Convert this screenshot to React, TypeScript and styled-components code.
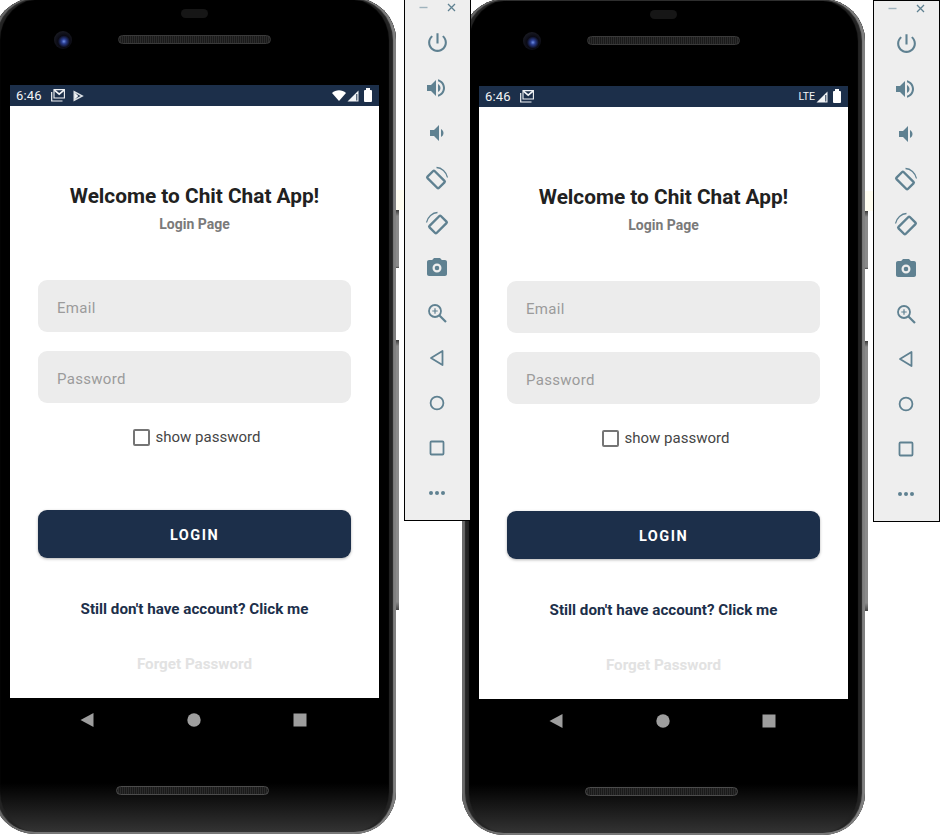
import React from 'react';
import styled, { createGlobalStyle } from 'styled-components';

const navy = '#1c2f4a';
const toolColor = '#5f8191';

const GlobalStyle = createGlobalStyle`
  html, body {
    margin: 0;
    padding: 0;
    background: #fff;
    overflow: hidden;
  }
  * {
    box-sizing: border-box;
  }
`;

const Desktop = styled.div`
  display: flex;
  width: 941px;
  height: 836px;
  margin-left: -7px;
  overflow: visible;
`;

const Emulator = styled.div<{ $second?: boolean }>`
  position: relative;
  z-index: ${(props) => (props.$second ? 1 : 2)};
  display: flex;
  align-items: flex-start;
  gap: 8px;
  margin-top: ${(props) => (props.$second ? '-1px' : '-2px')};
  margin-left: ${(props) => (props.$second ? '-9px' : '0')};
`;

const Phone = styled.div`
  position: relative;
  flex: none;
  display: flex;
  flex-direction: column;
  width: 403px;
  height: 836px;
  padding: 0 17px;
  border-radius: 42px;
  background: linear-gradient(180deg, #000 0, #000 785px, #333 834px);
  box-shadow: inset -3px 0 1px #808080, inset 3px 0 1px #6a6a6a, inset 0 -2px 0 #777, inset 0 2px 0 #2e2e2e,
    inset -7px 0 1px #242424, inset 7px 0 1px #242424;
`;

const SideGlow = styled.div`
  position: absolute;
  top: 192px;
  right: -8px;
  width: 8px;
  height: 20px;
  background: #fffdf0;
`;

const SideKey = styled.div<{ $top: number; $height: number }>`
  position: absolute;
  top: ${(props) => props.$top}px;
  right: -3px;
  width: 3px;
  height: ${(props) => props.$height}px;
  background: linear-gradient(180deg, #3a3a3a 0, #8a8a8a 6px, #8a8a8a 97%, #444 100%);
`;

const TopBezel = styled.div`
  position: relative;
  flex: none;
  display: flex;
  flex-direction: column;
  align-items: center;
  height: 87px;
`;

const Pill = styled.div`
  width: 27px;
  height: 9px;
  margin-top: 11px;
  border-radius: 5px;
  background: #161616;
`;

const Speaker = styled.div`
  width: 153px;
  height: 9px;
  margin-top: 17px;
  border-radius: 5px;
  background: repeating-linear-gradient(90deg, #1a1a1a 0, #1a1a1a 1px, #2c2c2c 1px, #2c2c2c 2px);
  border: 1px solid #3a3a3a;
`;

const Camera = styled.div`
  position: absolute;
  top: 33px;
  left: 44px;
  width: 18px;
  height: 18px;
  border-radius: 50%;
  background: radial-gradient(circle at 55% 58%, #6f8fe8 0, #2a3d90 16%, #0a0a14 42%, #26282e 100%);
`;

const Screen = styled.div`
  flex: none;
  display: flex;
  flex-direction: column;
  width: 369px;
  height: 613px;
  background: #fff;
  font-family: Roboto, 'Liberation Sans', sans-serif;
`;

const StatusBar = styled.div`
  flex: none;
  display: flex;
  align-items: center;
  justify-content: space-between;
  height: 21px;
  padding: 0 7px 0 6px;
  background: ${navy};
  color: #f2f4f6;
`;

const StatusLeft = styled.div`
  display: flex;
  align-items: center;
  gap: 8px;
`;

const StatusRight = styled.div`
  display: flex;
  align-items: center;
  gap: 1px;
`;

const Clock = styled.span`
  font-size: 13px;
  letter-spacing: 0.2px;
  margin-right: 1px;
`;

const Lte = styled.span`
  font-size: 10.5px;
`;

const LoginForm = styled.div`
  flex: 1;
  display: flex;
  flex-direction: column;
  align-items: center;
  padding: 78px 28px 0;
`;

const Title = styled.h1`
  margin: 0;
  font-size: 20.8px;
  line-height: 24px;
  font-weight: 700;
  color: #212121;
`;

const Subtitle = styled.div`
  margin-top: 8px;
  font-size: 14px;
  line-height: 16px;
  font-weight: 700;
  color: #7a7a7a;
`;

const Field = styled.input`
  display: block;
  width: 313px;
  height: 52px;
  margin-top: 19px;
  padding: 3px 19px 0;
  border: none;
  border-radius: 9px;
  outline: none;
  background: #ececec;
  font-family: inherit;
  font-size: 15px;
  letter-spacing: 0.3px;

  &::placeholder {
    color: #9b9b9b;
    opacity: 1;
  }
`;

const EmailField = styled(Field)`
  margin-top: 48px;
`;

const CheckRow = styled.label`
  display: flex;
  align-items: center;
  gap: 6px;
  margin-top: 25px;
  padding-left: 4px;
  font-size: 15px;
  line-height: 18px;
  color: #454545;
`;

const CheckBox = styled.span`
  display: block;
  width: 17px;
  height: 17px;
  border: 2px solid #757575;
  border-radius: 2px;
`;

const LoginButton = styled.button`
  width: 313px;
  height: 48px;
  margin-top: 64px;
  padding: 2px 0 0;
  border: none;
  border-radius: 9px;
  background: ${navy};
  box-shadow: 0 1px 3px rgba(0, 0, 0, 0.3);
  color: #fff;
  font-family: inherit;
  font-size: 14.5px;
  font-weight: 700;
  letter-spacing: 1.5px;
`;

const SignupLink = styled.div`
  margin-top: 42px;
  font-size: 15.2px;
  line-height: 18px;
  font-weight: 700;
  color: ${navy};
`;

const ForgotLink = styled.div`
  margin-top: 37px;
  font-size: 15.2px;
  line-height: 18px;
  font-weight: 700;
  color: #e2e2e2;
`;

const NavRow = styled.div`
  flex: none;
  display: flex;
  justify-content: space-between;
  align-items: center;
  width: 227px;
  height: 14px;
  margin: 15px 0 0 70px;
`;

const BottomSpeaker = styled(Speaker)`
  flex: none;
  margin: 59px 0 0 106px;
  border-color: #4c4c4c;
`;

const ToolPanel = styled.div`
  flex: none;
  width: 67px;
  height: 522px;
  margin-top: 1px;
  padding: 0 1px 5px 0;
  border: 1px solid #000;
  background: #eeeeee;
`;

const WindowBar = styled.div`
  display: flex;
  justify-content: center;
  align-items: center;
  gap: 19px;
  height: 20px;
  padding-bottom: 5px;
`;

const ToolSlot = styled.div`
  display: flex;
  justify-content: center;
  align-items: center;
  height: 45px;
`;

const Icon = ({ d, size = 24 }: { d: string; size?: number }) => (
  <svg width={size} height={size} viewBox="0 0 24 24" fill={toolColor}>
    <path d={d} fillRule="evenodd" />
  </svg>
);

const RotateIcon = ({ flip }: { flip?: boolean }) => (
  <svg width={26} height={26} viewBox="0 0 26 26" fill="none" stroke={toolColor}>
    <g transform={flip ? 'translate(26 0) scale(-1 1)' : undefined}>
      <rect x="4" y="9.5" width="16" height="10" rx="1" strokeWidth="2.4" transform="rotate(45 12 14.5)" />
      <path d="M12.5 2.5 C17.5 2.5 22.5 7 23.5 12.5" strokeWidth="1.3" />
    </g>
  </svg>
);

const toolIcons: React.ReactNode[] = [
  <Icon
    key="power"
    size={25}
    d="M13 3h-2v10h2V3zm4.83 2.17l-1.42 1.42C17.99 7.86 19 9.81 19 12c0 3.87-3.13 7-7 7s-7-3.13-7-7c0-2.19 1.01-4.14 2.58-5.42L6.17 5.17C4.23 6.82 3 9.26 3 12c0 4.97 4.03 9 9 9s9-4.03 9-9c0-2.74-1.23-5.18-3.17-6.83z"
  />,
  <Icon
    key="vol-up"
    d="M2 9v6h4l5 5V4L6 9H2zm13.5 3c0-1.77-1.02-3.29-2.5-4.03v8.05c1.48-.73 2.5-2.25 2.5-4.02zM13 3.23v2.06c2.89.86 5 3.54 5 6.71s-2.11 5.85-5 6.71v2.06c4.01-.91 7-4.49 7-8.77s-2.99-7.86-7-8.77z"
  />,
  <Icon key="vol-down" d="M18.5 12c0-1.77-1.02-3.29-2.5-4.03v8.05c1.48-.73 2.5-2.25 2.5-4.02zM5 9v6h4l5 5V4L9 9H5z" />,
  <RotateIcon key="rotate-left" />,
  <RotateIcon key="rotate-right" flip />,
  <Icon
    key="camera"
    d="M9 2L7.17 4H4c-1.1 0-2 .9-2 2v12c0 1.1.9 2 2 2h16c1.1 0 2-.9 2-2V6c0-1.1-.9-2-2-2h-3.17L15 2H9zm3 14.5a4.5 4.5 0 1 1 0-9 4.5 4.5 0 0 1 0 9zm0-2.2a2.3 2.3 0 1 0 0-4.6 2.3 2.3 0 0 0 0 4.6z"
  />,
  <svg key="zoom" width={22} height={22} viewBox="0 0 22 22" fill="none" stroke={toolColor} strokeWidth="1.8">
    <circle cx="9" cy="9" r="6" />
    <path d="M13.5 13.5 L20 20" strokeWidth="2.2" />
    <path d="M9 6.3v5.4M6.3 9h5.4" strokeWidth="1.2" />
  </svg>,
  <svg key="back" width={16} height={18} viewBox="0 0 16 18" fill="none" stroke={toolColor} strokeWidth="1.8">
    <path d="M13.5 2 V16 L2 9 Z" strokeLinejoin="round" />
  </svg>,
  <svg key="home" width={16} height={16} viewBox="0 0 16 16" fill="none" stroke={toolColor} strokeWidth="1.8">
    <circle cx="8" cy="8" r="6.4" />
  </svg>,
  <svg key="square" width={16} height={16} viewBox="0 0 16 16" fill="none" stroke={toolColor} strokeWidth="1.8">
    <rect x="1.5" y="1.5" width="13" height="13" rx="1" />
  </svg>,
  <svg key="more" width={18} height={6} viewBox="0 0 18 6" fill={toolColor}>
    <circle cx="3" cy="3" r="2" />
    <circle cx="9" cy="3" r="2" />
    <circle cx="15" cy="3" r="2" />
  </svg>,
];

const Tools = () => (
  <ToolPanel>
    <WindowBar>
      <svg width={9} height={9} viewBox="0 0 9 9" stroke="#9fb3bd" strokeWidth="1.4">
        <path d="M0.5 4.5 H8.5" />
      </svg>
      <svg width={9} height={9} viewBox="0 0 9 9" stroke={toolColor} strokeWidth="1.3">
        <path d="M1 1 L8 8 M8 1 L1 8" />
      </svg>
    </WindowBar>
    {toolIcons.map((icon, index) => (
      <ToolSlot key={index}>{icon}</ToolSlot>
    ))}
  </ToolPanel>
);

const MailIcon = () => (
  <svg width={14} height={13} viewBox="0 0 14 13" fill="none" stroke="#f2f4f6">
    <path d="M3 0.6 H13.4 V9 H3 Z" strokeWidth="1.1" />
    <path d="M3.4 1.2 L8.2 5.2 L13 1.2" strokeWidth="1.7" />
    <path d="M0.7 3 V12 H11.5" strokeWidth="1.2" />
  </svg>
);

const PlayIcon = () => (
  <svg width={11} height={12} viewBox="0 0 11 12" fill="#f2f4f6">
    <path d="M0.5 0.5 L10.8 6 L0.5 11.5 Z M2 3 V9 L7.6 6 Z" fillRule="evenodd" opacity="0.9" />
    <path d="M2 2.8 L5.3 6 L2 9.2 Z" />
  </svg>
);

const WifiIcon = () => (
  <svg width={14} height={11} viewBox="0 0 14 11" fill="#fff">
    <path d="M0 3 C3.8 -0.8 10.2 -0.8 14 3 L7 11 Z" />
  </svg>
);

const SignalIcon = () => (
  <svg width={12} height={12} viewBox="0 0 12 12">
    <path d="M0.5 11.5 L11.5 0.5 V11.5 Z" fill="#f2f4f6" />
    <path d="M9 4 H10.4 V10.4 H9 Z" fill={navy} opacity="0.7" />
  </svg>
);

const BatteryIcon = styled.span`
  display: block;
  position: relative;
  width: 8px;
  height: 12px;
  margin: 1px 0 0 4px;
  border-radius: 1px;
  background: #fff;

  &::before {
    content: '';
    position: absolute;
    top: -2px;
    left: 2px;
    width: 4px;
    height: 2px;
    background: #fff;
  }
`;

const NavIcons = () => (
  <NavRow>
    <svg width={14} height={14} viewBox="0 0 14 14" fill="#9e9e9e">
      <path d="M13.5 0 V14 L0.5 7 Z" />
    </svg>
    <svg width={14} height={14} viewBox="0 0 14 14" fill="#9e9e9e">
      <circle cx="7" cy="7" r="6.7" />
    </svg>
    <svg width={14} height={14} viewBox="0 0 14 14" fill="#9e9e9e">
      <rect x="0.5" y="0.5" width="13" height="13" />
    </svg>
  </NavRow>
);

const Device = ({ second }: { second?: boolean }) => (
  <Emulator $second={second}>
    <Phone>
      <SideGlow />
      <SideKey $top={212} $height={58} />
      <SideKey $top={342} $height={270} />
      <TopBezel>
        <Pill />
        <Speaker />
        <Camera />
      </TopBezel>
      <Screen>
        <StatusBar>
          <StatusLeft>
            <Clock>6:46</Clock>
            <MailIcon />
            {!second && <PlayIcon />}
          </StatusLeft>
          <StatusRight>
            {second ? <Lte>LTE</Lte> : <WifiIcon />}
            <SignalIcon />
            <BatteryIcon />
          </StatusRight>
        </StatusBar>
        <LoginForm>
          <Title>Welcome to Chit Chat App!</Title>
          <Subtitle>Login Page</Subtitle>
          <EmailField placeholder="Email" readOnly />
          <Field placeholder="Password" readOnly />
          <CheckRow>
            <CheckBox />
            show password
          </CheckRow>
          <LoginButton>LOGIN</LoginButton>
          <SignupLink>Still don't have account? Click me</SignupLink>
          <ForgotLink>Forget Password</ForgotLink>
        </LoginForm>
      </Screen>
      <NavIcons />
      <BottomSpeaker />
    </Phone>
    <Tools />
  </Emulator>
);

const App = () => (
  <>
    <GlobalStyle />
    <Desktop>
      <Device />
      <Device second />
    </Desktop>
  </>
);

export default App;
